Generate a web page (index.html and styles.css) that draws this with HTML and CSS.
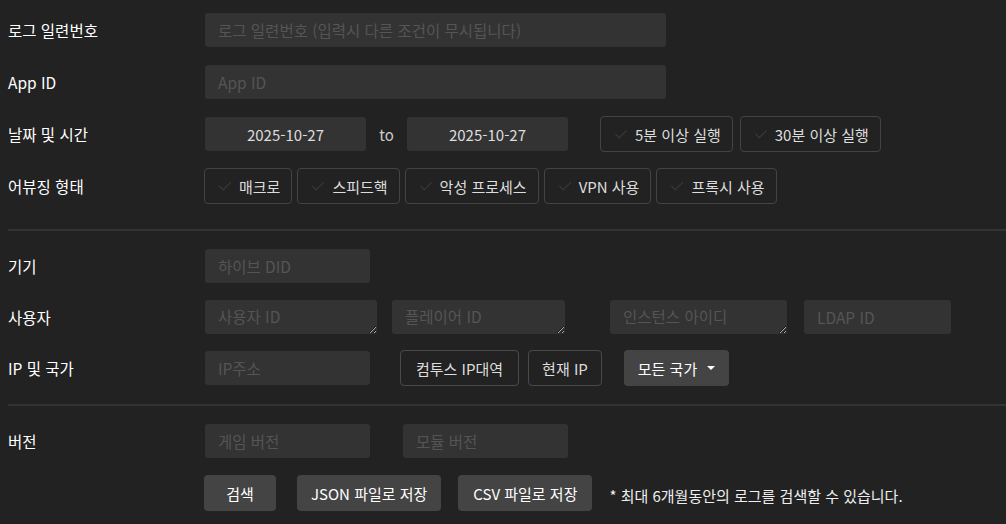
FILE: index.html
```html
<!DOCTYPE html>
<html lang="ko">
<head>
    <meta charset="UTF-8" />
    <title>로그 검색</title>
    <link rel="stylesheet" href="styles.css">
</head>
<body>
    <div class="form">
        <div class="section">
            <div class="row">
                <label class="label">로그 일련번호</label>
                <input class="input wide" type="text" placeholder="로그 일련번호 (입력시 다른 조건이 무시됩니다)">
            </div>
            <div class="row">
                <label class="label">App ID</label>
                <input class="input wide" type="text" placeholder="App ID">
            </div>
            <div class="row">
                <label class="label">날짜 및 시간</label>
                <input class="input date" type="text" value="2025-10-27">
                <span class="to">to</span>
                <input class="input date" type="text" value="2025-10-27">
                <button class="toggle first-toggle" type="button"><span class="check"></span>5분 이상 실행</button>
                <button class="toggle" type="button"><span class="check"></span>30분 이상 실행</button>
            </div>
            <div class="row">
                <label class="label">어뷰징 형태</label>
                <div class="toggles">
                    <button class="toggle" type="button"><span class="check"></span>매크로</button>
                    <button class="toggle" type="button"><span class="check"></span>스피드핵</button>
                    <button class="toggle" type="button"><span class="check"></span>악성 프로세스</button>
                    <button class="toggle" type="button"><span class="check"></span>VPN 사용</button>
                    <button class="toggle" type="button"><span class="check"></span>프록시 사용</button>
                </div>
            </div>
        </div>

        <div class="section">
            <div class="row">
                <label class="label">기기</label>
                <input class="input short" type="text" placeholder="하이브 DID">
            </div>
            <div class="row">
                <label class="label">사용자</label>
                <textarea class="input area user-id" rows="1" placeholder="사용자 ID"></textarea>
                <textarea class="input area player-id" rows="1" placeholder="플레이어 ID"></textarea>
                <textarea class="input area instance-id" rows="1" placeholder="인스턴스 아이디"></textarea>
                <input class="input ldap" type="text" placeholder="LDAP ID">
            </div>
            <div class="row">
                <label class="label">IP 및 국가</label>
                <input class="input short" type="text" placeholder="IP주소">
                <button class="outline-btn campus" type="button">컴투스 IP대역</button>
                <button class="outline-btn" type="button">현재 IP</button>
                <button class="dropdown" type="button">모든 국가 <span class="caret"></span></button>
            </div>
        </div>

        <div class="section last">
            <div class="row">
                <label class="label">버전</label>
                <input class="input short" type="text" placeholder="게임 버전">
                <input class="input short module" type="text" placeholder="모듈 버전">
            </div>
            <div class="row actions">
                <button class="solid-btn" type="button">검색</button>
                <button class="solid-btn json" type="button">JSON 파일로 저장</button>
                <button class="solid-btn csv" type="button">CSV 파일로 저장</button>
                <span class="note">* 최대 6개월동안의 로그를 검색할 수 있습니다.</span>
            </div>
        </div>
    </div>
</body>
</html>
```

FILE: styles.css
```css
/* 페이지 */
body {
    margin: 0;
    background: #222;
    color: #fff;
    font-family: "Noto Sans CJK KR", "Noto Sans", sans-serif;
    font-size: 15px;
}

.form {
    padding: 12px 0 0 8px;
}

/* 구역 구분선 */
.section {
    border-bottom: 2px solid #333;
    padding-bottom: 25px;
    margin-bottom: 17px;
}

.section + .section {
    padding-bottom: 18px;
}

.section.last {
    border-bottom: none;
    padding-bottom: 0;
}

.row {
    display: flex;
    align-items: center;
    height: 36px;
    margin-bottom: 15px;
}

.section:first-child .row {
    margin-bottom: 16px;
}

.section .row:last-child {
    margin-bottom: 0;
}

.label {
    width: 197px;
    flex: none;
    color: #fff;
    font-size: 15.5px;
}

/* 입력창 */
.input {
    box-sizing: border-box;
    height: 34px;
    padding: 0 13px;
    border: none;
    border-radius: 3px;
    background: #333;
    color: #ddd;
    font-family: inherit;
    font-size: 15.5px;
    outline: none;
}

.input::placeholder {
    color: #555;
}

.wide {
    width: 461px;
}

.short {
    width: 165px;
}

.date {
    width: 161px;
    text-align: center;
    font-size: 15px;
}

.to {
    width: 41px;
    text-align: center;
    color: #ccc;
}

textarea.area {
    resize: vertical;
    padding-top: 6px;
    line-height: 20px;
    overflow: hidden;
    color-scheme: dark;
}

.user-id {
    width: 172px;
}

.player-id {
    width: 173px;
    margin-left: 15px;
}

.instance-id {
    width: 177px;
    margin-left: 45px;
}

.ldap {
    width: 147px;
    margin-left: 17px;
}

.module {
    margin-left: 33px;
}

/* 체크 버튼 */
.toggles {
    display: flex;
    gap: 5px;
    margin-left: -1px;
}

.toggle {
    display: flex;
    align-items: center;
    height: 36px;
    padding: 0 11px 0 14px;
    border: 1px solid #444;
    border-radius: 4px;
    background: transparent;
    color: #ddd;
    font-family: inherit;
    font-size: 15px;
    cursor: pointer;
}

.row > .toggle + .toggle {
    margin-left: 7px;
}

.first-toggle {
    margin-left: 32px;
}

.check {
    width: 5px;
    height: 10px;
    margin: -4px 11px 0 3px;
    border-right: 1.5px solid #3c3c3c;
    border-bottom: 1.5px solid #3c3c3c;
    transform: rotate(45deg);
}

/* 테두리 버튼 */
.outline-btn {
    height: 36px;
    padding: 0 14px;
    border: 1px solid #4a4a4a;
    border-radius: 4px;
    background: transparent;
    color: #ddd;
    font-family: inherit;
    font-size: 15px;
    cursor: pointer;
}

.campus {
    margin-left: 30px;
    padding: 0 15px;
}

.outline-btn + .outline-btn {
    margin-left: 9px;
    padding: 0 13px;
}

.dropdown {
    display: flex;
    align-items: center;
    gap: 10px;
    height: 36px;
    margin-left: 22px;
    padding: 0 14px;
    border: none;
    border-radius: 4px;
    background: #444;
    color: #fff;
    font-family: inherit;
    font-size: 15px;
    cursor: pointer;
}

.caret {
    width: 0;
    height: 0;
    border-left: 4px solid transparent;
    border-right: 4px solid transparent;
    border-top: 4px solid #fff;
}

/* 하단 버튼 */
.actions {
    margin-top: 16px;
    padding-left: 196px;
}

.solid-btn {
    height: 36px;
    padding: 0 14px;
    border: none;
    border-radius: 4px;
    background: #444;
    color: #fff;
    font-family: inherit;
    font-size: 15px;
    cursor: pointer;
}

.solid-btn:first-child {
    width: 72px;
}

.json {
    margin-left: 21px;
}

.csv {
    margin-left: 17px;
    padding: 0 15px;
}

.note {
    margin-left: 17px;
    margin-top: 4px;
    color: #eee;
    font-size: 15px;
}
```
